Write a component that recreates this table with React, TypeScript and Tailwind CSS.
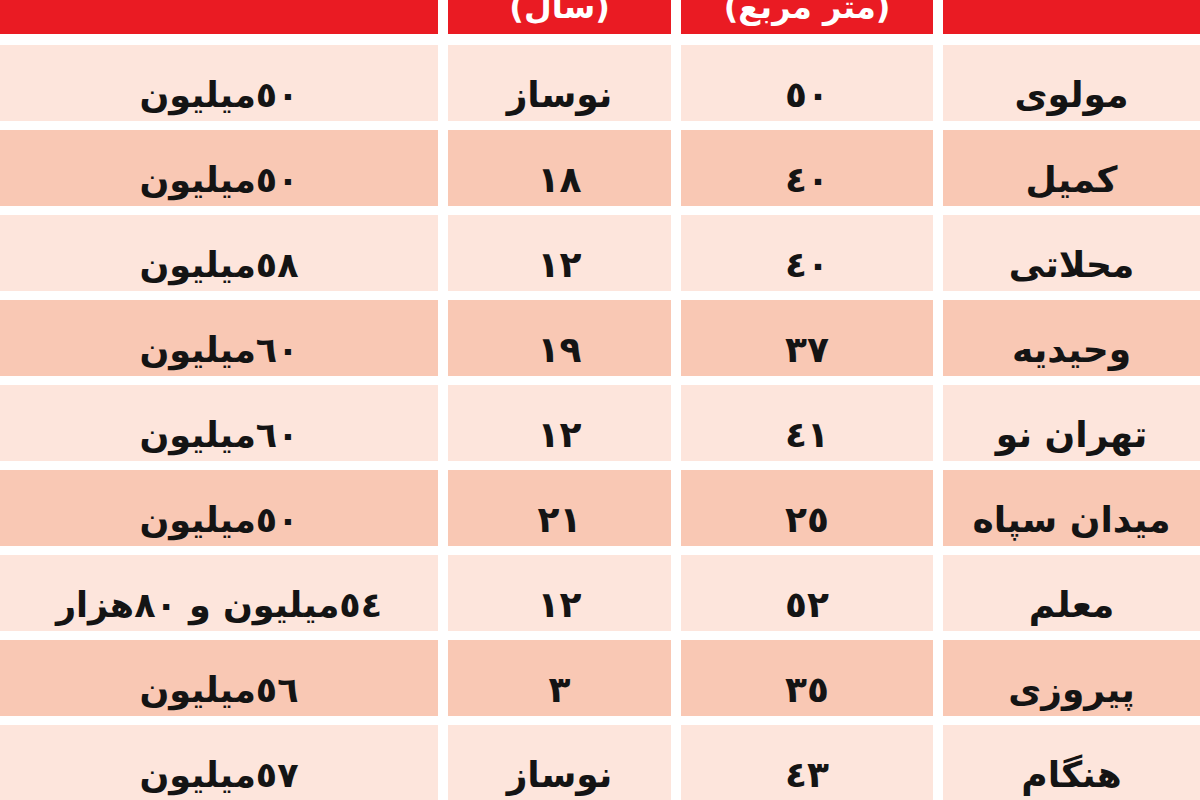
import React from "react";

const rows: [string, string, string, string][] = [
  ["مولوی", "٥٠", "نوساز", "٥٠میلیون"],
  ["کمیل", "٤٠", "١٨", "٥٠میلیون"],
  ["محلاتی", "٤٠", "١٢", "٥٨میلیون"],
  ["وحیدیه", "٣٧", "١٩", "٦٠میلیون"],
  ["تهران نو", "٤١", "١٢", "٦٠میلیون"],
  ["میدان سپاه", "٢٥", "٢١", "٥٠میلیون"],
  ["معلم", "٥٢", "١٢", "٥٤میلیون و ٨٠هزار"],
  ["پیروزی", "٣٥", "٣", "٥٦میلیون"],
  ["هنگام", "٤٣", "نوساز", "٥٧میلیون"],
];

const font = { fontFamily: '"DejaVu Sans", sans-serif' };

export default function App() {
  return (
    <div
      dir="rtl"
      className="w-[1200px] h-[800px] overflow-hidden bg-white flex flex-col"
      style={font}
    >
      <div className="grid grid-cols-[257px_252px_223px_438px] gap-x-[10px] h-[34px] shrink-0">
        <div className="bg-[#ea1b23] overflow-hidden"></div>
        <div className="bg-[#ea1b23] overflow-hidden flex justify-center">
          <span className="text-white font-bold text-[32px] leading-none -mt-[9px] whitespace-nowrap">
            (متر مربع)
          </span>
        </div>
        <div className="bg-[#ea1b23] overflow-hidden flex justify-center">
          <span className="text-white font-bold text-[32px] leading-none -mt-[9px] whitespace-nowrap">
            (سال)
          </span>
        </div>
        <div className="bg-[#ea1b23] overflow-hidden"></div>
      </div>
      <div className="mt-[11px] flex flex-col gap-y-[9px]">
        {rows.map((r, i) => {
          const bg = i % 2 === 0 ? "bg-[#fde5dc]" : "bg-[#f9c8b4]";
          return (
            <div
              key={i}
              className="grid grid-cols-[257px_252px_223px_438px] gap-x-[10px] h-[76px] shrink-0"
            >
              {r.map((c, j) => (
                <div
                  key={j}
                  className={`${bg} flex items-center justify-center pt-[24px] leading-none text-[#141414] font-bold ${
                    j === 0 ? "text-[36px]" : j === 3 ? "text-[35px]" : "text-[36px]"
                  } whitespace-nowrap`}
                >
                  {c}
                </div>
              ))}
            </div>
          );
        })}
      </div>
    </div>
  );
}
